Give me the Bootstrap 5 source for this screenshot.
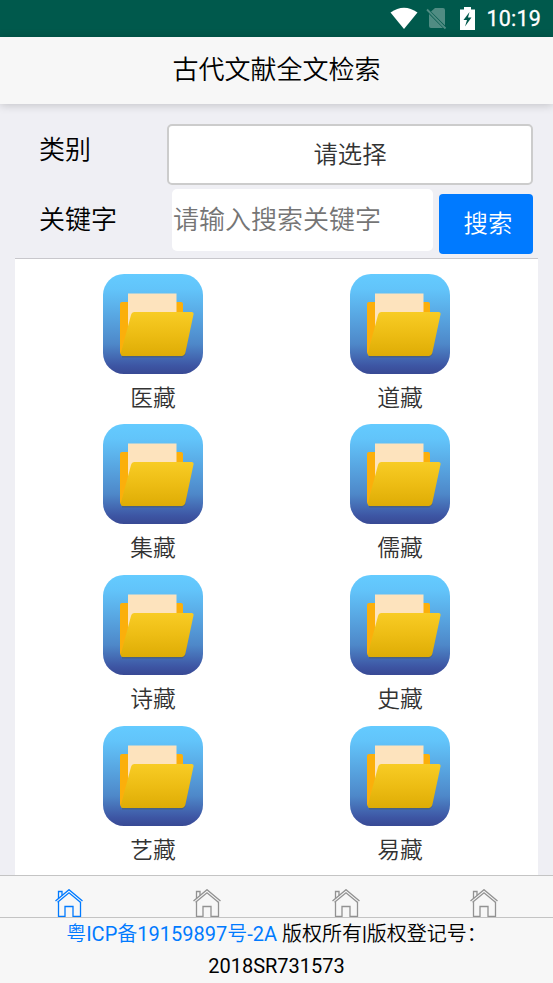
<!DOCTYPE html>
<html lang="zh-CN">
<head>
    <meta charset="UTF-8">
    <meta name="viewport" content="width=device-width, initial-scale=1.0">
    <title>古代文献全文检索</title>
    <link href="https://cdn.jsdelivr.net/npm/bootstrap@5.3.0/dist/css/bootstrap.min.css" rel="stylesheet">
    <style>
        body {
            height: 983px;
            font-family: Roboto, "Noto Sans CJK SC DemiLight", "Noto Sans CJK SC", sans-serif;
            background: #efeff4;
            color: #000;
            overflow: hidden;
        }
        .title-bar, .search-form, .search-form .btn, .keyword, .folder-panel {
            font-family: "Noto Sans CJK SC DemiLight", "Noto Sans CJK SC", sans-serif;
            font-weight: 350;
        }
        .status-bar { height: 37px; background: #00594c; color: #fff; padding-right: 12px; }
        .status-bar .clock { font-size: 21.5px; font-weight: 400; line-height: 39px; letter-spacing: .2px; -webkit-text-stroke: .3px #fff; }
        .title-bar {
            height: 67px;
            background: #f7f7f7;
            box-shadow: 0 1px 9px rgba(0, 0, 0, .2);
            z-index: 2;
        }
        .title-bar h1 { font-size: 26px; font-weight: 350; line-height: 62px; }
        .search-form { height: 154px; padding: 20px 20px 0 39px; }
        .search-form label { font-size: 26px; line-height: 48px; width: 128px; }
        .pick-btn {
            height: 61px;
            border: 2px solid #ccc;
            border-radius: 5px;
            background: #fff;
            color: #333;
            font-size: 24.4px;
            padding: 0 0 2px;
        }
        .keyword {
            height: 62px;
            width: 261px;
            border: 0;
            border-radius: 5px;
            padding: 0 0 4px 1px;
            font-size: 26px;
            color: #000;
        }
        .keyword::placeholder { color: #757575; opacity: 1; }
        .search-btn {
            width: 94px;
            height: 60px;
            margin: 5px 0 0 6px;
            border: 0;
            border-radius: 4px;
            background: #007aff;
            font-size: 24.4px;
            padding: 0 0 3px 4px;
        }
        .folder-panel {
            margin: 0 15px;
            padding: 15px 14.5px 0;
            border-top: 1px solid #c8c7cc;
            background: #fff;
        }
        .folder-item { height: 150.7px; color: #333; font-size: 22.8px; line-height: 45px; }
        .folder-item svg { width: 100px; height: 100px; }
        .tab-strip { height: 43px; background: #f7f7f7; border-top: 1px solid #c4c4c4; border-bottom: 1px solid #c4c4c4; padding-top: 13px; flex: none; }
        .tab-strip a { color: #929292; line-height: 0; }
        .tab-strip a.active { color: #007aff; }
        .site-footer { height: 65px; background: #f7f7f7; font-size: 20px; line-height: 32px; flex: none; }
        .site-footer a { color: #007aff; }
    </style>
</head>
<body class="d-flex flex-column">
<!-- Folder and home symbols -->
<svg width="0" height="0" class="position-absolute">
    <defs>
        <linearGradient id="sky" x1="0" y1="0" x2="0" y2="1">
            <stop offset="0" stop-color="#64cbff"/>
            <stop offset=".15" stop-color="#62c4fa"/>
            <stop offset=".7" stop-color="#4e88c9"/>
            <stop offset=".92" stop-color="#3d55a3"/>
            <stop offset="1" stop-color="#384994"/>
        </linearGradient>
        <linearGradient id="gold" x1="0" y1="0" x2="0" y2="1">
            <stop offset="0" stop-color="#f8cc25"/>
            <stop offset=".5" stop-color="#edbd14"/>
            <stop offset="1" stop-color="#deac05"/>
        </linearGradient>
        <symbol id="folder" viewBox="0 0 100 100">
            <rect width="100" height="100" rx="21" fill="url(#sky)"/>
            <path d="M19 82.5h60l3-3" fill="none" stroke="#4c5a62" stroke-opacity=".6" stroke-width="2"/>
            <path d="M19 28h59q2 0 2 2v20H26L19 81q-2-1-2-3V30q0-2 2-2z" fill="#fbaf0b"/>
            <path d="M25 19.5h48.5V40H30L25 61z" fill="#fde3bd"/>
            <path d="M31.5 38h57q2.5 0 2 2.5L82.5 78q-.8 4-4 4H20q-3 0-2-3.5L28 41q.8-3 3.5-3z" fill="url(#gold)"/>
        </symbol>
        <symbol id="home" viewBox="0 0 28 28">
            <g fill="none" stroke="currentColor" stroke-width="1.3">
                <path d="M.5 12 14 .7 27.5 12M2.6 13.2 14 3.8l11.4 9.4"/>
                <path d="M3.5 9.5v-7h3.5V6.5M3.5 12.7v14.6h6.500v-9.800h8v9.800h7.500V12.700"/>
            </g>
        </symbol>
    </defs>
</svg>

<!-- Status bar -->
<div class="status-bar d-flex justify-content-end align-items-center">
    <svg width="28" height="23" viewBox="0 0 28 23"><path d="M.5 5.5Q14-4 27.5 5.5L14 22z" fill="#fff"/></svg>
    <svg class="ms-2" width="22" height="23" viewBox="0 0 22 23">
        <path d="M9 1h8q2 0 2 2v15.500L5 4.500zM3 7l14 14H5q-2 0-2-2z" fill="#508c83"/>
        <path d="m1 2.500 18.500 19" stroke="#508c83" stroke-width="1.8"/>
    </svg>
    <svg width="15" height="23" viewBox="0 0 15 23" style="margin-left: 12px">
        <path d="M0 2.5h4V0h7v2.5h4V23H0z" fill="#fff"/>
        <path d="M9.500 5 3.500 13h3.500l-2 6.500L11.500 10.500H8z" fill="#00594c"/>
    </svg>
    <span class="clock" style="margin-left: 11px">10:19</span>
</div>

<!-- Title -->
<header class="title-bar position-relative text-center">
    <h1 class="m-0">古代文献全文检索</h1>
</header>

<!-- Search form -->
<form class="search-form">
    <div class="d-flex">
        <label>类别</label>
        <button type="button" class="btn pick-btn flex-grow-1">请选择</button>
    </div>
    <div class="d-flex" style="padding-top: 4px">
        <label for="keyword" style="width: 133px; padding-top: 5px">关键字</label>
        <input type="text" id="keyword" class="form-control keyword" placeholder="请输入搜索关键字">
        <button type="button" class="btn btn-primary search-btn">搜索</button>
    </div>
</form>

<!-- Folders -->
<main class="folder-panel flex-grow-1 overflow-hidden">
    <div class="row g-0 text-center" id="folderList"></div>
</main>

<!-- Tabs -->
<nav class="tab-strip d-flex text-center">
    <a href="#" class="flex-fill active"><svg width="28" height="28"><use href="#home"/></svg></a>
    <a href="#" class="flex-fill"><svg width="28" height="28"><use href="#home"/></svg></a>
    <a href="#" class="flex-fill"><svg width="28" height="28"><use href="#home"/></svg></a>
    <a href="#" class="flex-fill"><svg width="28" height="28"><use href="#home"/></svg></a>
</nav>

<!-- Footer -->
<footer class="site-footer text-center">
    <div><a href="#" class="text-decoration-none">粤ICP备19159897号-2A</a> 版权所有|版权登记号：</div>
    <div>2018SR731573</div>
</footer>

<script>
    const folders = ['医藏', '道藏', '集藏', '儒藏', '诗藏', '史藏', '艺藏', '易藏'];
    const list = document.getElementById('folderList');
    folders.forEach((name) => {
        list.innerHTML += `
            <div class="col-6 folder-item">
                <svg class="d-block mx-auto"><use href="#folder"/></svg>
                <div>${name}</div>
            </div>
        `;
    });
</script>
<script src="https://cdn.jsdelivr.net/npm/bootstrap@5.3.0/dist/js/bootstrap.bundle.min.js"></script>
</body>
</html>
